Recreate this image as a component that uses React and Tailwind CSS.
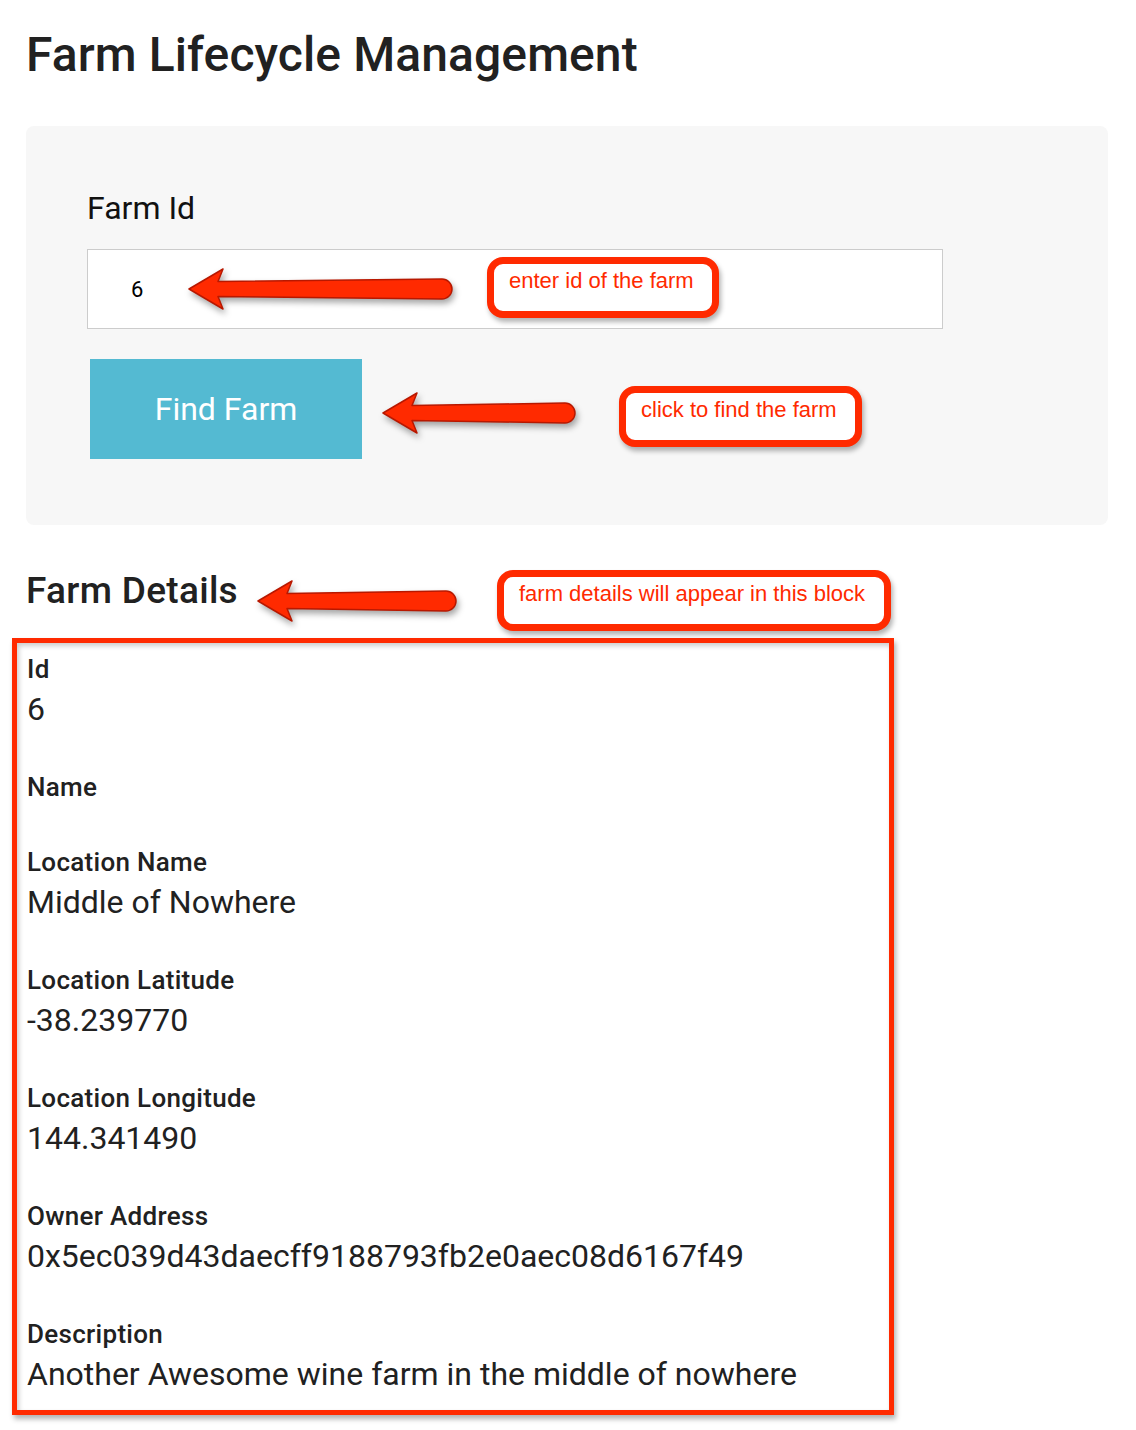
import React from "react";

function Arrow({ left, top, width }) {
  const W = width;
  const d = `M2 24 L36 4 L31 ${24 - 7.5} L${W - 10} ${24 - 10} A10 10 0 0 1 ${W - 10} ${24 + 10} L31 ${24 + 7.5} L36 44 Z`;
  return (
    <svg
      className="absolute drop-shadow-[2px_4px_3px_rgba(0,0,0,0.35)]"
      style={{ left: left - 2, top: top - 24 }}
      width={W + 4}
      height={50}
      viewBox={`0 0 ${W + 4} 50`}
    >
      <path d={d} fill="#ff2a00" stroke="#b81800" strokeWidth="1.5" strokeLinejoin="round" />
    </svg>
  );
}

function Callout({ left, top, width, children }) {
  return (
    <div
      className="absolute h-[61px] rounded-[16px] border-[7px] border-[#ff2a00] bg-white pl-[15px] pt-[4px] shadow-[2px_4px_5px_rgba(0,0,0,0.3)]"
      style={{ left, top, width }}
    >
      <span className="whitespace-nowrap font-['Liberation_Sans',Arial,sans-serif] text-[22px] leading-[25px] text-[#ff2a00]">
        {children}
      </span>
    </div>
  );
}

function Field({ label, value }) {
  return (
    <div className="mb-[38px]">
      <div className="text-[26px] font-medium leading-[37px] tracking-[0.3px] text-[#212121]">{label}</div>
      {value ? (
        <div className="whitespace-nowrap text-[32px] leading-[43px] text-[#212121]">{value}</div>
      ) : null}
    </div>
  );
}

export default function App() {
  return (
    <div className="relative min-h-[1430px] w-[1136px] bg-white pl-[26px] pr-[28px] font-['Roboto',sans-serif] text-[#212121]">
      <h1 className="pt-[27px] text-[48px] font-medium leading-[56px] tracking-[0.1px]">
        Farm Lifecycle Management
      </h1>

      <div className="mt-[43px] h-[399px] rounded-[8px] bg-[#f7f7f7] pl-[61px] pt-[63px]">
        <div className="text-[32px] leading-[38px] text-[#111]">Farm Id</div>
        <div className="mt-[22px] flex h-[80px] w-[856px] items-center border border-[#cccccc] bg-white pl-[43px]">
          <span className="text-[22px] text-black">6</span>
        </div>
        <button className="ml-[3px] mt-[30px] flex h-[100px] w-[272px] items-center justify-center bg-[#54bad2] text-[32px] text-white">
          Find Farm
        </button>
      </div>

      <h2 className="mt-[45px] text-[37px] font-medium leading-[42px] tracking-[0.3px]">Farm Details</h2>

      <div className="mt-[39px] pl-[1px]">
        <Field label="Id" value="6" />
        <Field label="Name" value="" />
        <Field label="Location Name" value="Middle of Nowhere" />
        <Field label="Location Latitude" value="-38.239770" />
        <Field label="Location Longitude" value="144.341490" />
        <Field label="Owner Address" value="0x5ec039d43daecff9188793fb2e0aec08d6167f49" />
        <Field label="Description" value="Another Awesome wine farm in the middle of nowhere" />
      </div>

      {/* annotations */}
      <div className="pointer-events-none absolute left-[12px] top-[638px] h-[777px] w-[882px] border-[5px] border-[#ff2a00] shadow-[2px_4px_5px_rgba(0,0,0,0.3),inset_2px_3px_5px_rgba(0,0,0,0.2)]" />

      <Arrow left={189} top={289} width={265} />
      <Callout left={487} top={257} width={232}>enter id of the farm</Callout>

      <Arrow left={383} top={413} width={194} />
      <Callout left={619} top={386} width={243}>click to find the farm</Callout>

      <Arrow left={258} top={601} width={200} />
      <Callout left={497} top={570} width={394}>farm details will appear in this block</Callout>
    </div>
  );
}
